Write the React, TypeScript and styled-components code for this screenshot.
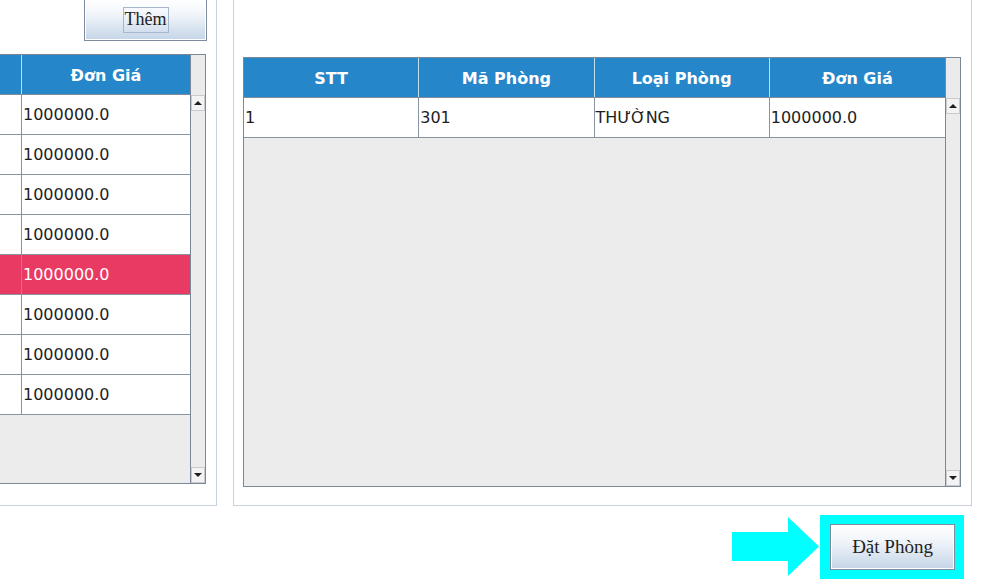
import React from "react";
import styled, { createGlobalStyle } from "styled-components";

const Global = createGlobalStyle`
  *, *::before, *::after { box-sizing: border-box; }
  html, body { margin: 0; padding: 0; background: #ffffff; }
  body { font-family: "DejaVu Sans", "Noto Sans", sans-serif; }
`;

const Viewport = styled.div`
  width: 997px;
  height: 580px;
  overflow: hidden;
  background: #ffffff;
`;

const Canvas = styled.div`
  display: flex;
  flex-direction: column;
  width: max-content;
  margin-left: -493px;
  margin-top: -12px;
`;

const TopRow = styled.div`
  display: flex;
  gap: 16px;
  align-items: stretch;
`;

const Panel = styled.section<{ $width: number; $pad: string }>`
  width: ${(p) => p.$width}px;
  padding: ${(p) => p.$pad};
  border: 1px solid #c9d2db;
  background: #ffffff;
  display: flex;
  flex-direction: column;
  align-items: flex-start;
`;

const ButtonBar = styled.div`
  align-self: stretch;
  display: flex;
  justify-content: flex-end;
  margin-bottom: 13px;
`;

const ClassicButton = styled.button<{ $w: number; $h: number; $size: number }>`
  width: ${(p) => p.$w}px;
  height: ${(p) => p.$h}px;
  padding: 0;
  margin: 0;
  display: flex;
  align-items: center;
  justify-content: center;
  font-family: "Liberation Serif", "Times New Roman", serif;
  font-size: ${(p) => p.$size}px;
  color: #222222;
  border: 1px solid #7d8d9e;
  box-shadow: inset 0 0 0 1px #ffffff;
  background: linear-gradient(to bottom, #ffffff 0%, #f1f5fa 35%, #d9e4f0 70%, #c4d4e7 100%);
  cursor: pointer;
`;

const FocusRing = styled.span`
  display: inline-flex;
  align-items: center;
  height: 26px;
  padding: 0 1px 1px 1px;
  border: 1px solid #a7b7cb;
`;

const TableBox = styled.div<{ $viewWidth: number }>`
  width: ${(p) => p.$viewWidth + 17}px;
  height: 430px;
  border: 1px solid #7b8897;
  display: flex;
  background: #ececec;
`;

const TableView = styled.div<{ $viewWidth: number }>`
  width: ${(p) => p.$viewWidth}px;
  display: flex;
  flex-direction: column;
  background: #ececec;
`;

const HeaderRow = styled.div`
  display: grid;
  grid-template-columns: repeat(4, 1fr);
  height: 40px;
  background: #2586ca;
  border-bottom: 1px solid #7f8c9a;
`;

const HeaderCell = styled.div`
  display: flex;
  align-items: center;
  justify-content: center;
  color: #ffffff;
  font-weight: bold;
  font-size: 16px;
  padding-top: 2px;
  border-right: 1px solid #c4dcef;
  &:last-child {
    border-right: none;
  }
`;

const BodyRow = styled.div<{ $selected?: boolean }>`
  display: grid;
  grid-template-columns: repeat(4, 1fr);
  height: 40px;
  border-bottom: 1px solid #8894a2;
  background: ${(p) => (p.$selected ? "#e83a62" : "#ffffff")};
  color: ${(p) => (p.$selected ? "#ffffff" : "#1e1e1e")};
`;

const BodyCell = styled.div`
  display: flex;
  align-items: center;
  padding-left: 1px;
  font-size: 16px;
  white-space: nowrap;
  overflow: hidden;
  border-right: 1px solid #8894a2;
  &:last-child {
    border-right: none;
  }
`;

const ScrollBar = styled.div`
  width: 15px;
  border-left: 1px solid #7b8897;
  display: flex;
  flex-direction: column;
  background: #ececec;
`;

const ScrollCorner = styled.div`
  height: 40px;
  background: #ebebeb;
`;

const ScrollTrack = styled.div`
  flex: 1;
  background: #ececec;
`;

const ScrollButton = styled.div<{ $dir: "up" | "down" }>`
  height: 16px;
  background: #f3f3f3;
  border: 1px solid #c8ccd1;
  display: flex;
  align-items: center;
  justify-content: center;
  &::after {
    content: "";
    width: 0;
    height: 0;
    border-left: 4px solid transparent;
    border-right: 4px solid transparent;
    ${(p) =>
      p.$dir === "up"
        ? "border-bottom: 4px solid #1e1e1e;"
        : "border-top: 4px solid #1e1e1e;"}
  }
`;

const BottomRow = styled.div`
  display: flex;
  justify-content: flex-end;
  align-items: center;
  margin-top: 9px;
  padding-right: 8px;
`;

const Arrow = styled.svg`
  display: block;
  margin-right: 1px;
`;

const CyanFrame = styled.div`
  width: 144px;
  height: 64px;
  padding: 9px 9px 9px 10px;
  background: #00ffff;
`;

type Row = [string, string, string, string];

const HEAD = ["STT", "Mã Phòng", "Loại Phòng", "Đơn Giá"];
const LEFT_HEAD = ["", "", "", "Đơn Giá"];

const LEFT_ROWS: Row[] = Array.from({ length: 8 }, () => ["", "", "", "1000000.0"] as Row);

const RIGHT_ROWS: Row[] = [["1", "301", "THƯỜNG", "1000000.0"]];

function DataTable({
  head,
  rows,
  viewWidth,
  selected,
}: {
  head: string[];
  rows: Row[];
  viewWidth: number;
  selected?: number;
}) {
  return (
    <TableBox $viewWidth={viewWidth}>
      <TableView $viewWidth={viewWidth}>
        <HeaderRow>
          {head.map((h, i) => (
            <HeaderCell key={i}>{h}</HeaderCell>
          ))}
        </HeaderRow>
        {rows.map((r, i) => (
          <BodyRow key={i} $selected={i === selected}>
            {r.map((c, j) => (
              <BodyCell key={j}>{c}</BodyCell>
            ))}
          </BodyRow>
        ))}
      </TableView>
      <ScrollBar>
        <ScrollCorner />
        <ScrollButton $dir="up" />
        <ScrollTrack />
        <ScrollButton $dir="down" />
      </ScrollBar>
    </TableBox>
  );
}

export default function App() {
  return (
    <Viewport>
      <Global />
      <Canvas>
        <TopRow>
          <Panel $width={710} $pad="10px 9px 21px 9px">
            <ButtonBar>
              <ClassicButton $w={123} $h={42} $size={18}>
                <FocusRing>Thêm</FocusRing>
              </ClassicButton>
            </ButtonBar>
            <DataTable head={LEFT_HEAD} rows={LEFT_ROWS} viewWidth={672} selected={4} />
          </Panel>
          <Panel $width={739} $pad="68px 10px 18px 9px">
            <DataTable head={HEAD} rows={RIGHT_ROWS} viewWidth={701} />
          </Panel>
        </TopRow>
        <BottomRow>
          <Arrow width="87" height="60" viewBox="0 0 87 60">
            <polygon points="0,15 56,15 56,0 87,29.5 56,59 56,44 0,44" fill="#00ffff" />
          </Arrow>
          <CyanFrame>
            <ClassicButton $w={125} $h={46} $size={19}>
              Đặt Phòng
            </ClassicButton>
          </CyanFrame>
        </BottomRow>
      </Canvas>
    </Viewport>
  );
}
